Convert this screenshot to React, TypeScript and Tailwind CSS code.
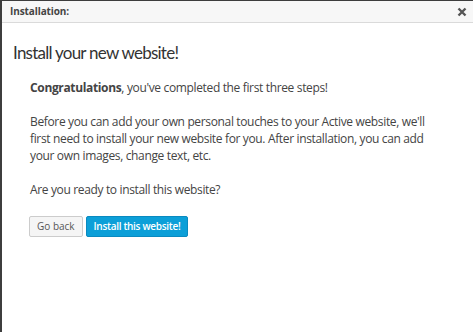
import React from "react";

export default function App() {
  return (
    <div className="w-[473px] h-[332px] bg-white border-t border-l-2 border-[#3d3d3d] overflow-hidden">
      <div className="h-[22px] bg-[#f7f7f7] border-b border-[#dadada] flex items-center justify-between pl-[8px] pr-[6px]">
        <span className="text-[10px] tracking-[-0.1px] font-bold text-[#444] font-['Open_Sans',sans-serif]">Installation:</span>
        <svg width="10" height="10" viewBox="0 0 10 10" className="mt-[1px]">
          <path d="M1.5 1.5 L8.5 8.5 M8.5 1.5 L1.5 8.5" stroke="#555" strokeWidth="2.4" strokeLinecap="butt" />
        </svg>
      </div>
      <h1 className="mt-[18px] pl-[11px] text-[17px] tracking-[-0.75px] leading-[24px] text-[#333] font-['Lato',sans-serif]">
        Install your new website!
      </h1>
      <div className="mt-[14px] pl-[28px] pr-[40px] text-[12px] tracking-[-0.35px] leading-[17px] text-[#444] font-['Open_Sans',sans-serif]">
        <p>
          <span className="font-bold">Congratulations</span>, you've completed the first three steps!
        </p>
        <p className="mt-[17px]">
          Before you can add your own personal touches to your Active website, we'll first need to install your new website for you. After installation, you can add your own images, change text, etc.
        </p>
        <p className="mt-[17px]">Are you ready to install this website?</p>
        <div className="mt-[18px] -ml-[1px] flex gap-[3px] tracking-normal">
          <button className="h-[21px] px-[7px] border border-[#ccc] rounded-[2px] bg-[#f5f5f5] text-[10px] text-[#555] font-['Open_Sans',sans-serif]">
            Go back
          </button>
          <button className="h-[21px] px-[7px] border border-[#0a8ac0] rounded-[2px] bg-[#0c9fd8] text-[10px] tracking-[-0.3px] font-semibold text-white font-['Open_Sans',sans-serif]">
            Install this website!
          </button>
        </div>
      </div>
    </div>
  );
}
